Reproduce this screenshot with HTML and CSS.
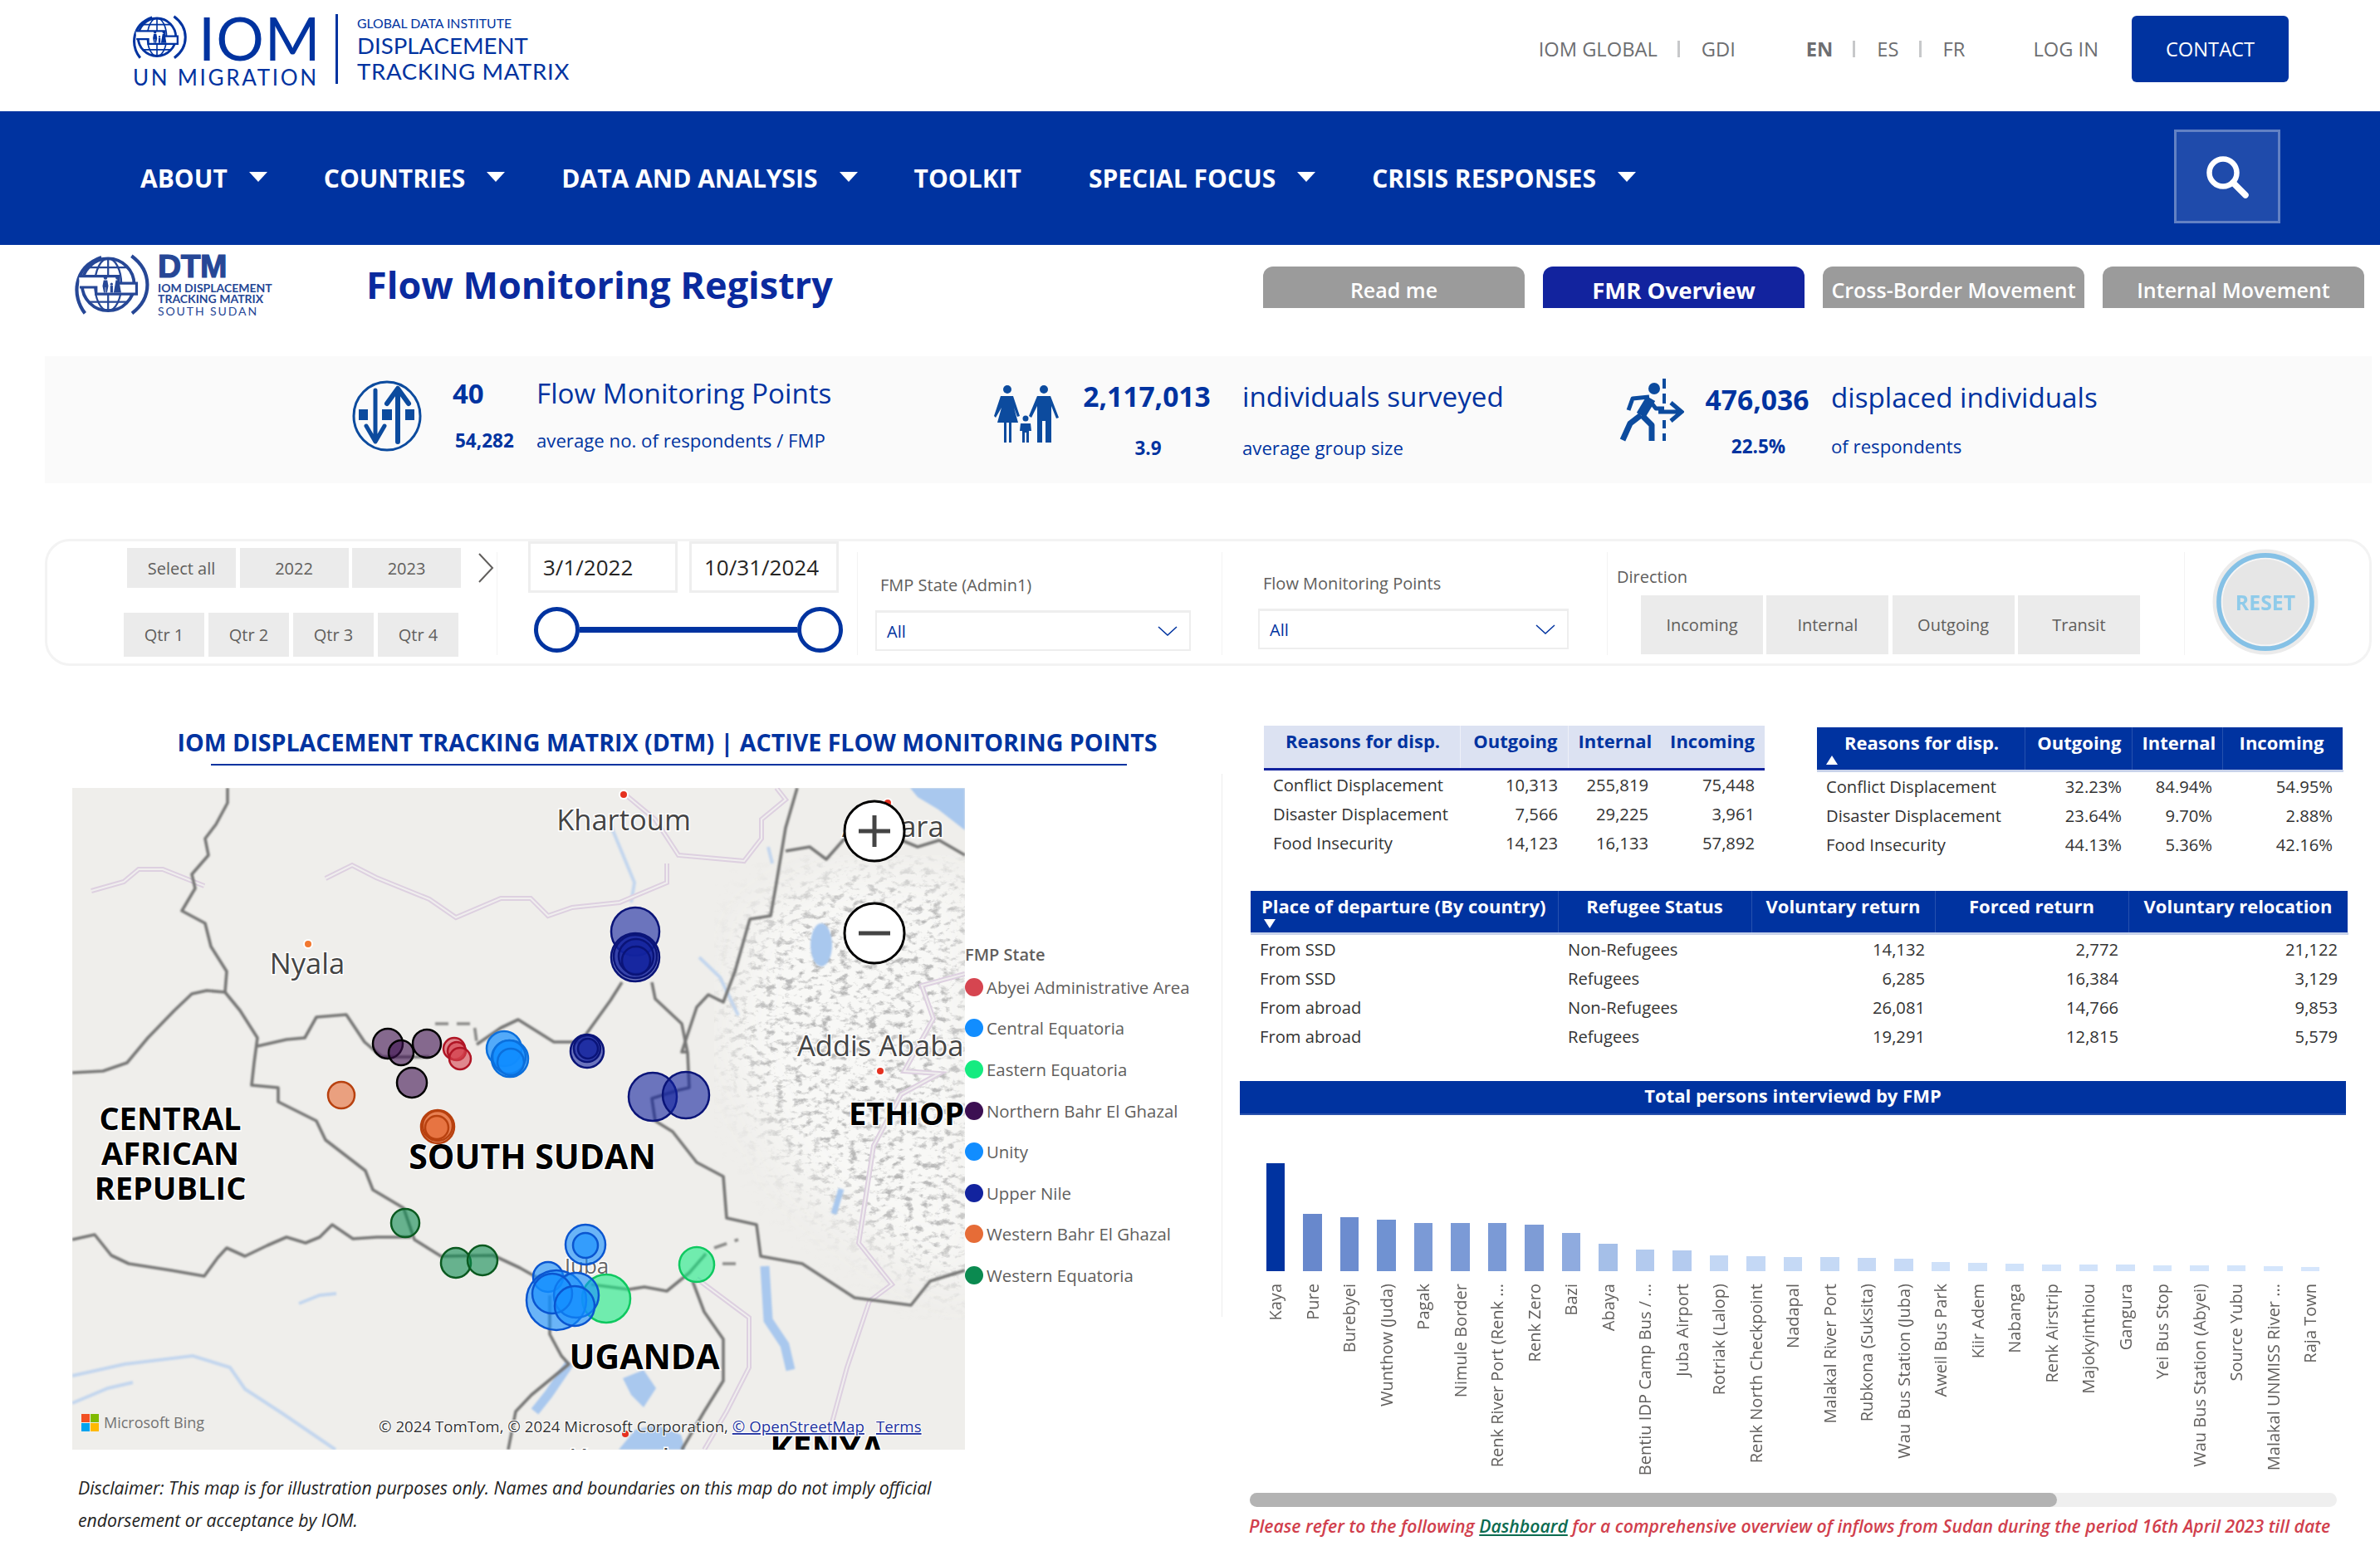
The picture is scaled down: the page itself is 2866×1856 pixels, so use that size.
FILE: index.html
```html
<!DOCTYPE html>
<html lang="en">
<head>
    <meta charset="UTF-8">
    <meta name="viewport" content="width=device-width, initial-scale=1.0">
    <title>Flow Monitoring Registry</title>
    <link rel="stylesheet" href="styles.css">
</head>
<body>
    <svg class="defs" width="0" height="0" aria-hidden="true">
        <symbol id="emblem" viewBox="90 45 280 228">
            <path d="M128 268C78 205 82 95 190 57" fill="none" stroke="currentColor" stroke-width="13"/>
            <path d="M303 52C382 110 382 210 305 268" fill="none" stroke="currentColor" stroke-width="13"/>
            <circle cx="215" cy="160" r="98" fill="#fff" stroke="currentColor" stroke-width="12"/>
            <ellipse cx="215" cy="160" rx="50" ry="98" fill="none" stroke="currentColor" stroke-width="7"/>
            <path d="M215 62V258M140 95H290M140 225H290" fill="none" stroke="currentColor" stroke-width="7"/>
            <path d="M105 128H255V155H322V195H170V170H108" fill="#fff" stroke="currentColor" stroke-width="10"/>
            <circle cx="205" cy="134" r="7" fill="currentColor"/>
            <circle cx="250" cy="134" r="7" fill="currentColor"/>
            <circle cx="228" cy="158" r="5" fill="currentColor"/>
            <path d="M198 143H212L216 165 211 190H206V170H204V190H199L194 165Z" fill="currentColor"/>
            <path d="M244 143H256L264 190H236Z" fill="currentColor"/>
            <path d="M223 164H233V190H223Z" fill="currentColor"/>
        </symbol>
    </svg>

    <header class="topbar">
        <div class="iom-logo">
            <svg class="iom-emblem"><use href="#emblem"/></svg>
            <div class="iom-word">IOM</div>
            <div class="iom-un">UN MIGRATION</div>
        </div>
        <div class="gdi-logo">
            <div class="gdi-small">GLOBAL DATA INSTITUTE</div>
            <div class="gdi-big">DISPLACEMENT</div>
            <div class="gdi-big">TRACKING MATRIX</div>
        </div>
        <div class="toplinks">
            <span>IOM GLOBAL</span><i class="sep"></i><span>GDI</span>
            <b class="lang-on">EN</b><i class="sep"></i><span>ES</span><i class="sep"></i><span>FR</span>
            <span class="login">LOG IN</span>
            <a class="contact">CONTACT</a>
        </div>
    </header>

    <nav class="mainnav">
        <a class="nav-item">ABOUT<i class="caret"></i></a>
        <a class="nav-item">COUNTRIES<i class="caret"></i></a>
        <a class="nav-item">DATA AND ANALYSIS<i class="caret"></i></a>
        <a class="nav-item nav-plain">TOOLKIT</a>
        <a class="nav-item">SPECIAL FOCUS<i class="caret"></i></a>
        <a class="nav-item">CRISIS RESPONSES<i class="caret"></i></a>
        <button class="search-btn" aria-label="Search">
            <svg width="54" height="54" viewBox="0 0 54 54"><circle cx="22" cy="22" r="16.5" fill="none" stroke="#fff" stroke-width="6.5"/><path d="M34 34L49 49" stroke="#fff" stroke-width="7.5" stroke-linecap="round"/></svg>
        </button>
    </nav>

    <section class="title-row">
        <div class="dtm-logo">
            <svg class="dtm-emblem"><use href="#emblem"/></svg>
            <div class="dtm-text">
                <div class="dtm-word">DTM</div>
                <div class="dtm-line">IOM DISPLACEMENT</div>
                <div class="dtm-line">TRACKING MATRIX</div>
                <div class="dtm-line dtm-light">SOUTH SUDAN</div>
            </div>
        </div>
        <h1>Flow Monitoring Registry</h1>
        <div class="tabs">
            <a class="tab">Read me</a>
            <a class="tab tab-active">FMR Overview</a>
            <a class="tab">Cross-Border Movement</a>
            <a class="tab">Internal Movement</a>
        </div>
    </section>

    <section class="kpi-band">
        <div class="kpi kpi-points">
            <svg class="kpi-icon" width="84" height="86" viewBox="0 0 84 86">
                <ellipse cx="42" cy="43" rx="40" ry="41" fill="none" stroke="#0c4b9e" stroke-width="3"/>
                <path d="M8 35H19V48H8ZM36 35H48V48H36ZM64 35H75V48H64Z" fill="#0c4b9e"/>
                <path d="M28 12V70M17 55L28 74 39 55" fill="none" stroke="#0c4b9e" stroke-width="5" stroke-linecap="round" stroke-linejoin="round"/>
                <path d="M55 74V14M42 28L55 10 68 28" fill="none" stroke="#0c4b9e" stroke-width="6" stroke-linecap="round" stroke-linejoin="round"/>
            </svg>
            <div class="kpi-num">40</div>
            <div class="kpi-label">Flow Monitoring Points</div>
            <div class="kpi-sub-num">54,282</div>
            <div class="kpi-sub">average no. of respondents / FMP</div>
        </div>
        <div class="kpi kpi-people">
            <svg class="kpi-icon" width="84" height="72" viewBox="0 0 84 72" fill="#0c4b9e">
                <circle cx="18" cy="6" r="5"/><circle cx="62" cy="6" r="5"/><circle cx="40" cy="41" r="3.5"/>
                <path d="M10 14H25L33 38 30 39 26 28 31 46H23V70H20V46H17V70H14V46H6L11 28 4 40 2 38Z"/>
                <path d="M54 14H70L80 40 77 41 71 26V70H64V44H60V70H54V26L47 40 44 38Z"/>
                <path d="M34 47H46L47 56 44 56V70H41V58H39V70H36V56L33 56Z"/>
            </svg>
            <div class="kpi-num">2,117,013</div>
            <div class="kpi-label">individuals surveyed</div>
            <div class="kpi-sub-num">3.9</div>
            <div class="kpi-sub">average group size</div>
        </div>
        <div class="kpi kpi-displaced">
            <svg class="kpi-icon" width="78" height="76" viewBox="0 0 78 76" fill="none" stroke="#0c4b9e">
                <circle cx="42" cy="12" r="7" fill="#0c4b9e" stroke="none"/>
                <path d="M38 24L26 44" stroke-width="12"/>
                <path d="M26 44L13 54 4 74" stroke-width="7" stroke-linejoin="round"/>
                <path d="M27 44L39 56V75" stroke-width="7" stroke-linejoin="round"/>
                <path d="M36 22L16 24 11 38" stroke-width="5" stroke-linejoin="round"/>
                <path d="M36 26L44 36H54" stroke-width="5" stroke-linejoin="round"/>
                <path d="M54 0V12M54 18V30M54 50V60M54 66V75" stroke-width="4"/>
                <path d="M47 40H72M62 29L75 40 62 51" stroke-width="5"/>
            </svg>
            <div class="kpi-num">476,036</div>
            <div class="kpi-label">displaced individuals</div>
            <div class="kpi-sub-num">22.5%</div>
            <div class="kpi-sub">of respondents</div>
        </div>
    </section>

    <section class="filters">
        <div class="filter-cell cell-time">
            <div class="year-row">
                <span class="chip chip-year">Select all</span>
                <span class="chip chip-year">2022</span>
                <span class="chip chip-year">2023</span>
                <svg class="year-next" width="20" height="36" viewBox="0 0 20 36"><path d="M2 1L18 18 2 35" fill="none" stroke="#605e5c" stroke-width="2"/></svg>
            </div>
            <div class="qtr-row">
                <span class="chip chip-qtr">Qtr 1</span>
                <span class="chip chip-qtr">Qtr 2</span>
                <span class="chip chip-qtr">Qtr 3</span>
                <span class="chip chip-qtr">Qtr 4</span>
            </div>
        </div>
        <div class="filter-cell cell-dates">
            <div class="date-row">
                <span class="date-box">3/1/2022</span>
                <span class="date-box">10/31/2024</span>
            </div>
            <div class="slider"><i class="knob"></i><i class="slider-line"></i><i class="knob"></i></div>
        </div>
        <div class="filter-cell cell-state">
            <div class="filter-label">FMP State (Admin1)</div>
            <div class="dropdown">All<svg width="24" height="12" viewBox="0 0 24 12"><path d="M1 1L12 11 23 1" fill="none" stroke="#0033a0" stroke-width="1.5"/></svg></div>
        </div>
        <div class="filter-cell cell-points">
            <div class="filter-label">Flow Monitoring Points</div>
            <div class="dropdown">All<svg width="24" height="12" viewBox="0 0 24 12"><path d="M1 1L12 11 23 1" fill="none" stroke="#0033a0" stroke-width="1.5"/></svg></div>
        </div>
        <div class="filter-cell cell-direction">
            <div class="filter-label">Direction</div>
            <div class="direction-row">
                <span class="chip chip-dir">Incoming</span>
                <span class="chip chip-dir">Internal</span>
                <span class="chip chip-dir">Outgoing</span>
                <span class="chip chip-dir">Transit</span>
            </div>
        </div>
        <div class="filter-cell cell-reset">
            <div class="reset"><span>RESET</span></div>
        </div>
    </section>

    <main class="content">
        <section class="left-col">
            <h2 class="map-title">IOM DISPLACEMENT TRACKING MATRIX (DTM) | ACTIVE FLOW MONITORING POINTS</h2>
            <div class="map-rule"></div>
            <div class="map-row">
                <svg class="map" width="1075" height="797" viewBox="87 949 1075 797">
                    <defs>
                        <filter id="soft" x="-5%" y="-5%" width="110%" height="110%"><feGaussianBlur stdDeviation="1.2"/></filter>
                        <filter id="softer" x="-20%" y="-20%" width="140%" height="140%"><feGaussianBlur stdDeviation="30"/></filter>
                        <filter id="relief" x="0" y="0" width="100%" height="100%">
                            <feTurbulence type="fractalNoise" baseFrequency="0.09 0.13" numOctaves="4" seed="11"/>
                            <feColorMatrix values="0 0 0 0 .42  0 0 0 0 .42  0 0 0 0 .42  3.8 0 0 0 -1.9"/>
                        </filter>
                        <mask id="highland"><path d="M905 1110L1010 1050 1175 1060V1560L1060 1500 960 1420 880 1270Z" fill="#fff" filter="url(#softer)"/></mask>
                    </defs>
                    <rect x="87" y="949" width="1075" height="797" fill="#efeeeb"/>
                    <rect x="860" y="1030" width="302" height="560" fill="#f8f8f6" mask="url(#highland)"/>
                    <rect x="860" y="1030" width="302" height="560" filter="url(#relief)" mask="url(#highland)" opacity=".85"/>

                    <g class="water" filter="url(#soft)">
                        <path class="lake" d="M1096 949H1162V1000L1130 975 1105 960Z"/>
                        <ellipse class="lake" cx="989" cy="1138" rx="13" ry="26"/>
                        <path class="lake-line" d="M921 1525L925 1590 945 1620 952 1650"/>
                        <path class="lake-line" d="M686 1642L660 1680 644 1700"/>
                        <path class="lake-line thin" d="M1013 1432L1004 1462"/>
                        <path class="lake" d="M745 1746L765 1722 790 1716 820 1728 825 1746Z"/>
                        <path class="lake" d="M750 1660L775 1650 790 1672 775 1695 760 1680Z"/>
                        <path class="river" d="M87 1657L150 1643 232 1633 277 1647 295 1673 341 1703 404 1746"/>
                        <path class="river" d="M87 1690L130 1672 160 1665"/>
                        <path class="river" d="M842 1153L867 1177 889 1223"/>
                        <path class="river" d="M735 993L764 1063 760 1087"/>
                        <path class="river" d="M360 1570L385 1560 405 1558"/>
                        <path class="river" d="M925 1020L930 1040"/>
                    </g>

                    <g class="roads">
                        <path d="M110 1073L149 1062 167 1047H196L246 1067"/>
                        <path d="M392 1058L424 1042 453 1057 517 1083 549 1105 603 1082H639L660 1103 689 1093 746 1087 803 1063V1040"/>
                        <path d="M753 957L789 987 817 1030 896 1037 917 1010V987L946 963 935 949"/>
                        <path d="M1162 1173L1110 1187 1124 1227 1089 1290 1131 1293 1085 1318 1052 1380 1034 1497 1074 1547 1047 1567 1020 1647 1002 1713 1000 1746"/>
                        <path d="M839 1540L902 1587V1647L875 1700 848 1746"/>
                    </g>
                    <g class="roads-inner">
                        <path d="M110 1073L149 1062 167 1047H196L246 1067"/>
                        <path d="M392 1058L424 1042 453 1057 517 1083 549 1105 603 1082H639L660 1103 689 1093 746 1087 803 1063V1040"/>
                        <path d="M753 957L789 987 817 1030 896 1037 917 1010V987L946 963 935 949"/>
                        <path d="M1162 1173L1110 1187 1124 1227 1089 1290 1131 1293 1085 1318 1052 1380 1034 1497 1074 1547 1047 1567 1020 1647 1002 1713 1000 1746"/>
                        <path d="M839 1540L902 1587V1647L875 1700 848 1746"/>
                    </g>

                    <g class="borders" filter="url(#soft)">
                        <path d="M274 949V967L260 993 247 1010 251 1030 231 1053 235 1070 219 1097 247 1112 254 1140 273 1170 271 1195"/>
                        <path d="M87 1292L124 1290 153 1280 178 1250 210 1217 231 1197 249 1193 271 1195 289 1217 310 1250 306 1280 303 1307 335 1310V1327L381 1350 392 1373 440 1410 449 1433 486 1455 499 1493 531 1513 594 1512 626 1527 649 1540"/>
                        <path d="M87 1493L114 1487 134 1512 155 1522 206 1530 246 1537 262 1515 273 1503 295 1513 322 1500 345 1490 368 1497 385 1490 400 1475 425 1492 454 1490 495 1490"/>
                        <path d="M310 1260L345 1252 367 1250 381 1225 417 1222 439 1255 460 1273 517 1273"/>
                        <path d="M574 1258L603 1238 624 1228 667 1255H699L735 1205 749 1183"/>
                        <path d="M785 1183L789 1203 821 1233 828 1268 830 1310 817 1313 785 1323 789 1350 810 1363 839 1400 871 1417 875 1467 911 1475 916 1513 966 1522 1029 1563 1097 1572 1120 1543 1162 1530"/>
                        <path d="M960 949L946 997 935 1063 928 1103 903 1107 885 1170 871 1207 853 1198 839 1213 821 1267H828"/>
                        <path d="M946 1025L975 1020 995 1035 1017 1010 1081 1010 1105 1020 1131 1012 1162 1030"/>
                        <path d="M712 1547L757 1553 776 1550 803 1555 830 1533 850 1510"/>
                        <path class="dash" d="M860 1503L889 1493M870 1522H890"/>
                        <path d="M662 1560V1607L676 1633 685 1643 640 1680 621 1700 612 1746"/>
                        <path d="M834 1543L848 1580 871 1613V1663L848 1700 821 1746"/>
                        <path class="dash" d="M524 1233H571L574 1255"/>
                    </g>

                    <g class="cities">
                        <circle cx="751" cy="957" r="6" class="halo"/><circle cx="751" cy="957" r="4" class="dot-red"/>
                        <circle cx="1069" cy="967" r="6" class="halo"/><circle cx="1069" cy="967" r="4" class="dot-red"/>
                        <circle cx="371" cy="1137" r="6" class="halo"/><circle cx="371" cy="1137" r="4" class="dot-orange"/>
                        <circle cx="1060" cy="1290" r="6" class="halo"/><circle cx="1060" cy="1290" r="4" class="dot-red"/>
                        <circle cx="753" cy="1727" r="4" class="dot-red"/>
                    </g>

                    <text class="city" x="751" y="1000" text-anchor="middle">Khartoum</text>
                    <text class="city" x="1014" y="1008">Asmara</text>
                    <text class="city" x="370" y="1173" text-anchor="middle">Nyala</text>
                    <text class="city" x="960" y="1272">Addis Ababa</text>
                    <text class="city city-small" x="680" y="1534">Juba</text>
                    <text class="city" x="685" y="1770">Kampala</text>
                    <text class="country" x="205" y="1361" text-anchor="middle">CENTRAL</text>
                    <text class="country" x="205" y="1403" text-anchor="middle">AFRICAN</text>
                    <text class="country" x="205" y="1445" text-anchor="middle">REPUBLIC</text>
                    <text class="country country-big" x="641" y="1408" text-anchor="middle">SOUTH SUDAN</text>
                    <text class="country country-big" x="776" y="1649" text-anchor="middle">UGANDA</text>
                    <text class="country" x="1022" y="1355">ETHIOPIA</text>
                    <text class="country country-big" x="996" y="1760" text-anchor="middle">KENYA</text>

                    <g class="pins">
                        <circle class="pin upper" cx="765" cy="1122" r="29"/>
                        <circle class="pin upper" cx="765" cy="1153" r="29"/>
                        <circle class="pin upper" cx="765" cy="1152" r="26"/>
                        <circle class="pin upper" cx="766" cy="1152" r="21"/>
                        <circle class="pin upper" cx="766" cy="1157" r="17"/>
                        <circle class="pin upper" cx="707" cy="1266" r="20"/>
                        <circle class="pin upper" cx="707" cy="1263" r="16"/>
                        <circle class="pin upper" cx="708" cy="1263" r="12"/>
                        <circle class="pin upper" cx="786" cy="1321" r="29"/>
                        <circle class="pin upper" cx="826" cy="1319" r="28"/>
                        <circle class="pin north" cx="467" cy="1257" r="18"/>
                        <circle class="pin north" cx="483" cy="1268" r="15"/>
                        <circle class="pin north" cx="514" cy="1257" r="17"/>
                        <circle class="pin north" cx="496" cy="1304" r="18"/>
                        <circle class="pin abyei" cx="547" cy="1263" r="13"/>
                        <circle class="pin abyei" cx="550" cy="1266" r="11"/>
                        <circle class="pin abyei" cx="554" cy="1275" r="13"/>
                        <circle class="pin unity" cx="607" cy="1263" r="21"/>
                        <circle class="pin unity" cx="614" cy="1275" r="22"/>
                        <circle class="pin unity" cx="613" cy="1273" r="20"/>
                        <circle class="pin unity" cx="615" cy="1279" r="16"/>
                        <circle class="pin wbahr" cx="411" cy="1319" r="16"/>
                        <circle class="pin wbahr" cx="527" cy="1357" r="20"/>
                        <circle class="pin wbahr" cx="527" cy="1356" r="18"/>
                        <circle class="pin wbahr" cx="526" cy="1358" r="14"/>
                        <circle class="pin wequa" cx="488" cy="1473" r="17"/>
                        <circle class="pin wequa" cx="549" cy="1521" r="18"/>
                        <circle class="pin wequa" cx="581" cy="1518" r="18"/>
                        <circle class="pin equa" cx="730" cy="1564" r="29"/>
                        <circle class="pin equa" cx="839" cy="1523" r="21"/>
                        <circle class="pin central" cx="705" cy="1499" r="24"/>
                        <circle class="pin central" cx="705" cy="1500" r="15"/>
                        <circle class="pin central" cx="660" cy="1538" r="18"/>
                        <circle class="pin central" cx="670" cy="1566" r="36"/>
                        <circle class="pin central" cx="694" cy="1560" r="27"/>
                        <circle class="pin central" cx="665" cy="1558" r="24"/>
                        <circle class="pin central" cx="692" cy="1573" r="24"/>
                    </g>

                    <g class="zoom-btn">
                        <circle cx="1053" cy="1001" r="36"/>
                        <circle cx="1053" cy="1124" r="36"/>
                        <path d="M1053 982V1020M1034 1001H1072M1034 1124H1072"/>
                    </g>

                    <path d="M98 1703H108V1713H98Z" fill="#f25022"/><path d="M109 1703H119V1713H109Z" fill="#7fba00"/>
                    <path d="M98 1714H108V1724H98Z" fill="#00a4ef"/><path d="M109 1714H119V1724H109Z" fill="#ffb900"/>
                    <text class="bing" x="125" y="1720">Microsoft Bing</text>
                    <text class="attrib" x="456" y="1725">© 2024 TomTom, © 2024 Microsoft Corporation, <tspan class="attrib-link">© OpenStreetMap</tspan><tspan class="attrib-link" dx="14">Terms</tspan></text>
                </svg>
                <aside class="legend">
                    <div class="legend-title">FMP State</div>
                    <div class="legend-item"><i class="dot c-abyei"></i>Abyei Administrative Area</div>
                    <div class="legend-item"><i class="dot c-unity"></i>Central Equatoria</div>
                    <div class="legend-item"><i class="dot c-equa"></i>Eastern Equatoria</div>
                    <div class="legend-item"><i class="dot c-north"></i>Northern Bahr El Ghazal</div>
                    <div class="legend-item"><i class="dot c-unity"></i>Unity</div>
                    <div class="legend-item"><i class="dot c-upper"></i>Upper Nile</div>
                    <div class="legend-item"><i class="dot c-wbahr"></i>Western Bahr El Ghazal</div>
                    <div class="legend-item"><i class="dot c-wequa"></i>Western Equatoria</div>
                </aside>
            </div>
            <p class="disclaimer">Disclaimer: This map is for illustration purposes only. Names and boundaries on this map do not imply official<br>endorsement or acceptance by IOM.</p>
        </section>

        <section class="right-col">
            <div class="tables-top">
                <table class="grid grid-light grid-a">
                    <thead><tr><th>Reasons for disp.</th><th>Outgoing</th><th>Internal</th><th>Incoming</th></tr></thead>
                    <tbody>
                        <tr><td>Conflict Displacement</td><td>10,313</td><td>255,819</td><td>75,448</td></tr>
                        <tr><td>Disaster Displacement</td><td>7,566</td><td>29,225</td><td>3,961</td></tr>
                        <tr><td>Food Insecurity</td><td>14,123</td><td>16,133</td><td>57,892</td></tr>
                    </tbody>
                </table>
                <table class="grid grid-dark grid-b">
                    <thead><tr><th>Reasons for disp.<i class="sort sort-up"></i></th><th>Outgoing</th><th>Internal</th><th>Incoming</th></tr></thead>
                    <tbody>
                        <tr><td>Conflict Displacement</td><td>32.23%</td><td>84.94%</td><td>54.95%</td></tr>
                        <tr><td>Disaster Displacement</td><td>23.64%</td><td>9.70%</td><td>2.88%</td></tr>
                        <tr><td>Food Insecurity</td><td>44.13%</td><td>5.36%</td><td>42.16%</td></tr>
                    </tbody>
                </table>
            </div>
            <table class="grid grid-dark grid-c">
                <thead><tr><th>Place of departure (By country)<i class="sort sort-down"></i></th><th>Refugee Status</th><th>Voluntary return</th><th>Forced return</th><th>Voluntary relocation</th></tr></thead>
                <tbody>
                    <tr><td>From SSD</td><td>Non-Refugees</td><td>14,132</td><td>2,772</td><td>21,122</td></tr>
                    <tr><td>From SSD</td><td>Refugees</td><td>6,285</td><td>16,384</td><td>3,129</td></tr>
                    <tr><td>From abroad</td><td>Non-Refugees</td><td>26,081</td><td>14,766</td><td>9,853</td></tr>
                    <tr><td>From abroad</td><td>Refugees</td><td>19,291</td><td>12,815</td><td>5,579</td></tr>
                </tbody>
            </table>
            <div class="banner">Total persons interviewd by FMP</div>
            <div class="chart">
                <div class="col"><div class="plot"><i class="bar" style="height:130px;background:#0033a0"></i></div><span class="name">Kaya</span></div>
                <div class="col"><div class="plot"><i class="bar" style="height:69px;background:#6888cc"></i></div><span class="name">Pure</span></div>
                <div class="col"><div class="plot"><i class="bar" style="height:65px;background:#6c8ccf"></i></div><span class="name">Burebyei</span></div>
                <div class="col"><div class="plot"><i class="bar" style="height:62px;background:#7092d2"></i></div><span class="name">Wunthow (Juda)</span></div>
                <div class="col"><div class="plot"><i class="bar" style="height:58px;background:#7b9ad6"></i></div><span class="name">Pagak</span></div>
                <div class="col"><div class="plot"><i class="bar" style="height:58px;background:#7b9ad6"></i></div><span class="name">Nimule Border</span></div>
                <div class="col"><div class="plot"><i class="bar" style="height:58px;background:#7b9ad6"></i></div><span class="name">Renk River Port (Renk ...</span></div>
                <div class="col"><div class="plot"><i class="bar" style="height:56px;background:#7e9cd6"></i></div><span class="name">Renk Zero</span></div>
                <div class="col"><div class="plot"><i class="bar" style="height:46px;background:#8fabdf"></i></div><span class="name">Bazi</span></div>
                <div class="col"><div class="plot"><i class="bar" style="height:33px;background:#a5bfe8"></i></div><span class="name">Abaya</span></div>
                <div class="col"><div class="plot"><i class="bar" style="height:26px;background:#b3caee"></i></div><span class="name">Bentiu IDP Camp Bus / ...</span></div>
                <div class="col"><div class="plot"><i class="bar" style="height:25px;background:#b4cbef"></i></div><span class="name">Juba Airport</span></div>
                <div class="col"><div class="plot"><i class="bar" style="height:19px;background:#c3d7f4"></i></div><span class="name">Rotriak (Lalop)</span></div>
                <div class="col"><div class="plot"><i class="bar" style="height:18px;background:#c4d8f5"></i></div><span class="name">Renk North Checkpoint</span></div>
                <div class="col"><div class="plot"><i class="bar" style="height:17px;background:#c5d9f5"></i></div><span class="name">Nadapal</span></div>
                <div class="col"><div class="plot"><i class="bar" style="height:17px;background:#c5d9f5"></i></div><span class="name">Malakal River Port</span></div>
                <div class="col"><div class="plot"><i class="bar" style="height:16px;background:#c6d9f5"></i></div><span class="name">Rubkona (Suksita)</span></div>
                <div class="col"><div class="plot"><i class="bar" style="height:15px;background:#c7daf6"></i></div><span class="name">Wau Bus Station (Juba)</span></div>
                <div class="col"><div class="plot"><i class="bar" style="height:11px;background:#cfe1f9"></i></div><span class="name">Aweil Bus Park</span></div>
                <div class="col"><div class="plot"><i class="bar" style="height:10px;background:#d0e2f9"></i></div><span class="name">Kiir Adem</span></div>
                <div class="col"><div class="plot"><i class="bar" style="height:9px;background:#d1e3fa"></i></div><span class="name">Nabanga</span></div>
                <div class="col"><div class="plot"><i class="bar" style="height:8px;background:#d2e3fa"></i></div><span class="name">Renk Airstrip</span></div>
                <div class="col"><div class="plot"><i class="bar" style="height:8px;background:#d2e3fa"></i></div><span class="name">Majokyinthiou</span></div>
                <div class="col"><div class="plot"><i class="bar" style="height:8px;background:#d2e3fa"></i></div><span class="name">Gangura</span></div>
                <div class="col"><div class="plot"><i class="bar" style="height:7px;background:#d4e5fb"></i></div><span class="name">Yei Bus Stop</span></div>
                <div class="col"><div class="plot"><i class="bar" style="height:7px;background:#d4e5fb"></i></div><span class="name">Wau Bus Station (Abyei)</span></div>
                <div class="col"><div class="plot"><i class="bar" style="height:7px;background:#d4e5fb"></i></div><span class="name">Source Yubu</span></div>
                <div class="col"><div class="plot"><i class="bar" style="height:6px;background:#d5e6fc"></i></div><span class="name">Malakal UNMISS River ...</span></div>
                <div class="col"><div class="plot"><i class="bar" style="height:5px;background:#d6e6fc"></i></div><span class="name">Raja Town</span></div>
            </div>
            <div class="scroll-track"><div class="scroll-thumb"></div></div>
            <p class="note">Please refer to the following <a>Dashboard</a> for a comprehensive overview of inflows from Sudan during the period 16th April 2023 till date</p>
        </section>
    </main>
</body>
</html>
```

FILE: styles.css
```css
* {
    box-sizing: border-box;
}
body {
    margin: 0;
    width: 2866px;
    height: 1856px;
    overflow: hidden;
    background-color: #fff;
    font-family: "Open Sans", "Noto Sans", sans-serif;
    color: #252423;
}
.defs {
    display: block;
    height: 0;
}

/* top bar */
.topbar {
    display: flex;
    height: 134px;
}
.iom-logo {
    display: grid;
    grid-template-columns: 79px 140px;
    grid-template-rows: 66px 30px;
    width: 247px;
    height: 84px;
    margin: 17px 0 0 160px;
    color: #0033a0;
    border-right: 3px solid #0033a0;
}
.iom-emblem {
    width: 65px;
    height: 55px;
}
.iom-word {
    font-family: Lato, sans-serif;
    font-size: 72px;
    line-height: 56px;
    letter-spacing: 1px;
}
.iom-un {
    grid-column: 1 / 3;
    font-family: Lato, sans-serif;
    font-size: 26px;
    line-height: 20px;
    letter-spacing: 2.7px;
    white-space: nowrap;
}
.gdi-logo {
    margin: 20px 0 0 23px;
    color: #0033a0;
    font-family: Lato, sans-serif;
    white-space: nowrap;
}
.gdi-small {
    font-size: 15.8px;
    line-height: 16px;
}
.gdi-big {
    font-size: 27.6px;
    line-height: 31px;
}
.gdi-small + .gdi-big {
    margin-top: 3px;
}
.gdi-big + .gdi-big {
    letter-spacing: 0.66px;
}
.toplinks {
    display: flex;
    align-items: center;
    margin-left: auto;
    margin-right: 110px;
    height: 118px;
    font-size: 23.7px;
    color: #6d6e71;
}
.toplinks b {
    font-weight: 700;
}
.sep {
    width: 3px;
    height: 20px;
    margin: 0 26px 0 24px;
    background-color: #c7c8ca;
}
.lang-on {
    margin-left: 85px;
}
.login {
    margin-left: 82px;
}
.contact {
    display: flex;
    align-items: center;
    justify-content: center;
    width: 189px;
    height: 80px;
    margin-left: 40px;
    border-radius: 6px;
    background-color: #0033a0;
    color: #fff;
}

/* main nav */
.mainnav {
    display: flex;
    align-items: center;
    height: 161px;
    padding-left: 169px;
    background-color: #0033a0;
}
.nav-item {
    display: flex;
    align-items: center;
    margin-right: 68px;
    font-size: 30px;
    font-weight: 700;
    color: #fff;
    white-space: nowrap;
}
.nav-plain {
    margin-right: 81px;
}
.caret {
    width: 0;
    height: 0;
    margin: -4px 0 0 26px;
    border-left: 11px solid transparent;
    border-right: 11px solid transparent;
    border-top: 12px solid #fff;
}
.search-btn {
    display: flex;
    align-items: center;
    justify-content: center;
    width: 128px;
    height: 113px;
    margin: -4px 120px 0 auto;
    padding: 0;
    border: 3px solid rgba(255, 255, 255, 0.3);
    background-color: rgba(255, 255, 255, 0.12);
}

/* report title row */
.title-row {
    display: flex;
    height: 134px;
}
.dtm-logo {
    display: flex;
    width: 351px;
    margin: 11px 0 0 90px;
    color: #264796;
}
.dtm-emblem {
    width: 90px;
    height: 73px;
}
.dtm-text {
    margin-left: 10px;
}
.dtm-word {
    font-family: "Liberation Sans", sans-serif;
    font-size: 39px;
    font-weight: 700;
    line-height: 30px;
    letter-spacing: -0.5px;
    -webkit-text-stroke: 1.2px #264796;
}
.dtm-line {
    font-family: Lato, sans-serif;
    font-size: 14px;
    font-weight: 700;
    line-height: 12.5px;
    white-space: nowrap;
}
.dtm-word + .dtm-line {
    margin-top: 5px;
}
.dtm-light {
    margin-top: 3px;
    font-weight: 400;
    letter-spacing: 1.9px;
}
h1 {
    margin: 18px 0 0 0;
    font-size: 45px;
    font-weight: 700;
    line-height: 60px;
    color: #0a2a9e;
    white-space: nowrap;
}
.tabs {
    display: flex;
    gap: 22px;
    margin: 26px 19px 0 auto;
}
.tab {
    display: flex;
    align-items: center;
    justify-content: center;
    width: 315px;
    height: 50px;
    padding-top: 6px;
    border-radius: 12px 12px 0 0;
    background-color: #9b9b9b;
    color: #fff;
    font-size: 25px;
    font-weight: 600;
    white-space: nowrap;
}
.tab-active {
    background-color: #12239e;
    font-size: 27.5px;
    font-weight: 700;
}

/* kpi band */
.kpi-band {
    display: flex;
    height: 153px;
    margin: 0 10px 0 54px;
    padding-left: 370px;
    background-color: #fafafa;
    color: #0033a0;
}
.kpi {
    display: grid;
    grid-template-rows: 44px 44px;
    row-gap: 15px;
    align-items: center;
    white-space: nowrap;
}
.kpi-points {
    grid-template-columns: 121px 101px auto;
    width: 771px;
    padding-top: 22px;
    row-gap: 13px;
}
.kpi-people {
    grid-template-columns: 107px 194px auto;
    width: 755px;
    padding-top: 26px;
    row-gap: 18px;
}
.kpi-displaced {
    grid-template-columns: 102px 153px auto;
    padding-top: 27px;
}
.kpi-icon {
    grid-row: 1 / 3;
    align-self: start;
}
.kpi-points .kpi-icon {
    margin-top: 7px;
}
.kpi-people .kpi-icon {
    margin-top: 8px;
}
.kpi-displaced .kpi-icon {
    margin-top: 0;
}
.kpi-num {
    font-size: 33px;
    font-weight: 700;
}
.kpi-people .kpi-num,
.kpi-displaced .kpi-num {
    font-size: 33.6px;
    width: 158px;
    text-align: center;
}
.kpi-displaced .kpi-num {
    width: 128px;
    padding-top: 6px;
}
.kpi-label {
    font-size: 33.2px;
}
.kpi-sub-num {
    font-size: 22.5px;
    font-weight: 700;
    padding-left: 3px;
}
.kpi-people .kpi-sub-num {
    width: 158px;
    text-align: center;
}
.kpi-displaced .kpi-sub-num {
    width: 128px;
    text-align: center;
}
.kpi-sub {
    font-size: 22.2px;
}

/* filter panel */
.filters {
    display: grid;
    grid-template-columns: 541px 434px 439px 464px 695px 223px;
    width: 2802px;
    height: 153px;
    margin: 67px 0 0 54px;
    border: 3px solid #f3f3f3;
    border-radius: 30px;
}
.filter-cell {
    height: 147px;
    background: linear-gradient(#f3f3f3, #f3f3f3) 0 13px / 1px 124px no-repeat;
}
.cell-time {
    background: none;
}
.chip {
    display: flex;
    align-items: center;
    justify-content: center;
    background-color: #ebebeb;
    color: #605e5c;
    font-size: 20px;
}
.year-row {
    display: flex;
    align-items: center;
    gap: 4.5px;
    margin: 8px 0 0 96px;
}
.chip-year {
    width: 131px;
    height: 48px;
}
.year-next {
    margin-left: 15px;
}
.qtr-row {
    display: flex;
    gap: 5px;
    margin: 30px 0 0 92px;
}
.chip-qtr {
    width: 97px;
    height: 53px;
}
.cell-dates {
    padding-left: 38px;
}
.date-row {
    display: flex;
    gap: 14px;
}
.date-box {
    display: flex;
    align-items: center;
    width: 180px;
    height: 62px;
    padding-left: 15px;
    border: 3px solid #eee;
    background-color: #fff;
    font-size: 26px;
}
.slider {
    display: flex;
    align-items: center;
    width: 372px;
    height: 56px;
    margin: 16px 0 0 7px;
}
.knob {
    width: 55px;
    height: 55px;
    border: 5px solid #0033a0;
    border-radius: 50%;
    background-color: #fff;
}
.slider-line {
    flex: 1;
    height: 7px;
    background-color: #0033a0;
}
.filter-label {
    font-size: 20px;
    line-height: 28px;
    color: #605e5c;
    white-space: nowrap;
}
.dropdown {
    display: flex;
    align-items: center;
    justify-content: space-between;
    height: 49px;
    padding: 0 14px 0 12px;
    border: 2px solid #eee;
    border-top-width: 3px;
    background-color: #fff;
    color: #0033a0;
    font-size: 20px;
}
.cell-state {
    padding: 39px 0 0 28px;
}
.cell-state .dropdown {
    width: 380px;
    margin: 16px 0 0 -6px;
}
.cell-points {
    padding: 37px 0 0 50px;
}
.cell-points .dropdown {
    width: 374px;
    margin: 16px 0 0 -6px;
}
.cell-direction {
    padding: 29px 0 0 12px;
}
.direction-row {
    display: flex;
    gap: 4.3px;
    margin: 8px 0 0 29px;
}
.chip-dir {
    width: 147px;
    height: 71px;
}
.reset {
    display: flex;
    align-items: center;
    justify-content: center;
    width: 128px;
    height: 128px;
    margin: 9px 0 0 34px;
    border-radius: 50%;
    background-color: #e6e6e6;
    border: 6px solid #85c1e6;
    box-shadow: 0 0 0 5px #ebebeb, inset 0 0 0 2px #f6f6f6;
    transform: scale(0.92);
    color: #8fcbea;
    font-size: 27px;
    font-weight: 700;
}

/* lower content */
.content {
    display: flex;
    margin-top: 72px;
}
.left-col {
    width: 1471px;
    padding-left: 87px;
}
.map-title {
    width: 1183px;
    margin: 0 0 0 125px;
    font-size: 28.6px;
    font-weight: 700;
    line-height: 40px;
    color: #0033a0;
    text-align: center;
    white-space: nowrap;
}
.map-rule {
    width: 1103px;
    height: 2px;
    margin: 6px 0 27px 167px;
    background-color: #0033a0;
}
.map-row {
    display: flex;
    width: 1384px;
}
.map {
    display: block;
    flex: none;
}
.water .lake {
    fill: #a9c8ee;
}
.lake-line {
    fill: none;
    stroke: #a9c8ee;
    stroke-width: 11;
}
.lake-line.thin {
    stroke-width: 7;
}
.river {
    fill: none;
    stroke: #c3d6ee;
    stroke-width: 4;
}
.roads path {
    fill: none;
    stroke: #ddd0e0;
    stroke-width: 6;
}
.roads-inner path {
    fill: none;
    stroke: #f0eeee;
    stroke-width: 2;
}
.borders path {
    fill: none;
    stroke: #767675;
    stroke-width: 3.6;
    stroke-linejoin: round;
}
.borders path.dash {
    stroke: #8a8a88;
    stroke-dasharray: 16 10;
}
.halo {
    fill: #fff;
}
.dot-red {
    fill: #e5301f;
}
.dot-orange {
    fill: #f27830;
}
.city {
    font-size: 34.5px;
    fill: #444;
    stroke: #fff;
    stroke-width: 3px;
    paint-order: stroke;
}
.city-small {
    font-size: 26px;
    fill: #666;
}
.country {
    font-size: 38px;
    font-weight: 700;
    fill: #000;
    stroke: #fff;
    stroke-width: 3px;
    paint-order: stroke;
}
.country-big {
    font-size: 41px;
}
.pin {
    fill-opacity: 0.6;
    stroke-width: 2.5;
}
.upper {
    fill: #12239e;
    stroke: #0a1478;
}
.north {
    fill: #3d1150;
    stroke: #000;
}
.abyei {
    fill: #d64550;
    stroke: #b01525;
}
.unity {
    fill: #118dff;
    fill-opacity: 0.7;
    stroke: #0b6fdc;
}
.wbahr {
    fill: #e66c37;
    stroke: #b8410f;
}
.wequa {
    fill: #0b8a50;
    stroke: #0b5a20;
}
.equa {
    fill: #1aeb85;
    stroke: #0fc860;
}
.central {
    fill: #118dff;
    stroke: #0a55d0;
}
.zoom-btn circle {
    fill: #fff;
    stroke: #000;
    stroke-width: 3;
}
.zoom-btn path {
    fill: none;
    stroke: #444;
    stroke-width: 5;
}
.bing {
    font-size: 18px;
    fill: #737373;
}
.attrib {
    font-size: 18.7px;
    fill: #333;
    stroke: #fff;
    stroke-width: 2px;
    paint-order: stroke;
}
.attrib-link {
    fill: #2233a0;
    text-decoration: underline;
}
.legend {
    width: 278px;
    margin-top: 187px;
    font-size: 20.4px;
    color: #605e5c;
    white-space: nowrap;
}
.legend-title {
    height: 28px;
    font-size: 20px;
    font-weight: 600;
    line-height: 28px;
}
.legend-item {
    display: flex;
    align-items: center;
    height: 49.6px;
}
.dot {
    width: 22px;
    height: 22px;
    margin-right: 4px;
    border-radius: 50%;
}
.c-abyei { background-color: #d64550; }
.c-unity { background-color: #118dff; }
.c-equa { background-color: #15eb80; }
.c-north { background-color: #3c0f52; }
.c-upper { background-color: #12239e; }
.c-wbahr { background-color: #e66c37; }
.c-wequa { background-color: #0b8a50; }
.disclaimer {
    margin: 26px 0 0 7px;
    font-size: 21.2px;
    font-style: italic;
    line-height: 39px;
    color: #222;
    white-space: nowrap;
}

/* right column */
.right-col {
    width: 1395px;
    background: linear-gradient(#ececec, #ececec) 0 58px / 1px 654px no-repeat;
}
.tables-top {
    display: flex;
    align-items: flex-start;
    height: 199px;
    padding-left: 51px;
}
.grid {
    table-layout: fixed;
    border-collapse: collapse;
    font-size: 20.2px;
    white-space: nowrap;
}
.grid th {
    padding: 3px 12px 0;
    font-size: 22px;
    font-weight: 700;
    line-height: 30px;
    vertical-align: top;
    text-align: right;
}
.grid td {
    height: 35px;
    padding: 0 12px;
    line-height: 35px;
    text-align: right;
    color: #333;
}
.grid td:first-child {
    text-align: left;
    padding-left: 11px;
}
.grid th:first-child {
    text-align: left;
}
.grid-light th {
    height: 52px;
    background-color: #dce2f2;
    border-bottom: 3px solid #12239e;
    color: #0033a0;
}
.grid-light th:first-child {
    padding-left: 26px;
    border-right: 1px solid #eef0f8;
}
.grid-light th:nth-child(2) {
    border-right: 1px solid #eef0f8;
}
.grid-dark th {
    height: 52px;
    background-color: #0033a0;
    border-bottom: 3px solid #c8d2ea;
    border-right: 1px solid rgba(255, 255, 255, 0.15);
    color: #fff;
}
.grid-a {
    width: 603px;
}
.grid-a th:nth-child(1) { width: 236px; }
.grid-a th:nth-child(2) { width: 130px; }
.grid-a th:nth-child(3) { width: 109px; }
.grid-a th:nth-child(4) { width: 128px; }
.grid-b {
    width: 633px;
    margin: 2px 0 0 63px;
}
.grid-b th:nth-child(1) { width: 250px; padding-left: 33px; }
.grid-b th:nth-child(2) { width: 129px; }
.grid-b th:nth-child(3) { width: 109px; }
.grid-b th:nth-child(4) { width: 145px; padding-right: 22px; }
.sort {
    display: block;
    width: 0;
    height: 0;
    margin: 1px 0 0 -22px;
    border-left: 7px solid transparent;
    border-right: 7px solid transparent;
}
.sort-up {
    border-bottom: 11px solid #fff;
}
.sort-down {
    margin: 1px 0 0 3px;
    border-top: 11px solid #fff;
}
.grid-c {
    width: 1321px;
    margin-left: 35px;
}
.grid-c th {
    height: 51px;
    text-align: center;
}
.grid-c th:nth-child(1) { width: 370px; padding-left: 13px; padding-right: 0; }
.grid-c th:nth-child(2) { width: 233px; }
.grid-c th:nth-child(3) { width: 221px; }
.grid-c th:nth-child(4) { width: 233px; }
.grid-c th:nth-child(5) { width: 264px; }
.grid-c td:nth-child(2) {
    text-align: left;
}
.banner {
    width: 1332px;
    height: 41px;
    margin: 36px 0 0 22px;
    background-color: #0033a0;
    border-bottom: 2px solid #2a52ad;
    color: #fff;
    font-size: 22px;
    font-weight: 700;
    line-height: 34px;
    text-align: center;
}
.chart {
    display: flex;
    height: 397px;
    margin: 58px 0 0 42.75px;
}
.col {
    display: flex;
    flex-direction: column;
    align-items: center;
    width: 44.5px;
}
.plot {
    display: flex;
    align-items: flex-end;
    height: 130px;
}
.bar {
    display: block;
    width: 22.5px;
}
.name {
    margin-top: 15px;
    writing-mode: vertical-rl;
    transform: rotate(180deg);
    font-size: 20px;
    line-height: 24px;
    color: #605e5c;
    white-space: nowrap;
}
.scroll-track {
    width: 1309px;
    height: 17px;
    margin-left: 34px;
    border-radius: 9px;
    background-color: #efefef;
}
.scroll-thumb {
    width: 972px;
    height: 100%;
    border-radius: 9px;
    background-color: #b3b3b3;
}
.note {
    margin: 8px 0 0 33px;
    font-size: 21.2px;
    font-style: italic;
    font-weight: 600;
    line-height: 30px;
    color: #d13f4d;
    white-space: nowrap;
}
.note a {
    color: #0b6b50;
    text-decoration: underline;
}
```
